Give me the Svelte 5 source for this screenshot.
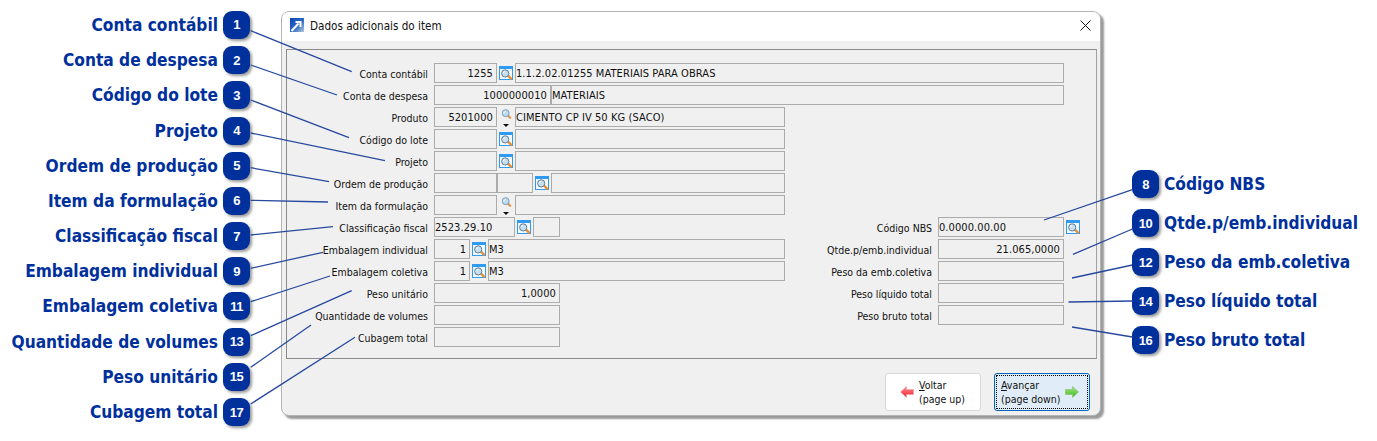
<script>
  const leftCalls = [
    ['Conta contábil', 1], ['Conta de despesa', 2], ['Código do lote', 3], ['Projeto', 4],
    ['Ordem de produção', 5], ['Item da formulação', 6], ['Classificação fiscal', 7],
    ['Embalagem individual', 9], ['Embalagem coletiva', 11], ['Quantidade de volumes', 13],
    ['Peso unitário', 15], ['Cubagem total', 17]
  ];
  const rightCalls = [
    ['Código NBS', 8], ['Qtde.p/emb.individual', 10], ['Peso da emb.coletiva', 12],
    ['Peso líquido total', 14], ['Peso bruto total', 16]
  ];
  const F = (w, t = '', r = false) => ({ k: 'f', w, t, r });
  const L = { k: 'l' };
  const M = { k: 'm' };
  const topRows = [
    ['Conta contábil', [F(63, '1255', true), L, F(549, '1.1.2.02.01255 MATERIAIS PARA OBRAS')]],
    ['Conta de despesa', [F(117, '1000000010', true), F(513, 'MATERIAIS')]],
    ['Produto', [F(63, '5201000', true), M, F(270, 'CIMENTO CP IV 50 KG (SACO)')]],
    ['Código do lote', [F(63), L, F(270)]],
    ['Projeto', [F(63), L, F(270)]],
    ['Ordem de produção', [F(63), F(36), L, F(234)]],
    ['Item da formulação', [F(63), M, F(270)]]
  ];
  const leftRows = [
    ['Classificação fiscal', [F(81, '2523.29.10'), L, F(27)]],
    ['Embalagem individual', [F(36, '1', true), L, F(297, 'M3')]],
    ['Embalagem coletiva', [F(36, '1', true), L, F(297, 'M3')]],
    ['Peso unitário', [F(126, '1,0000', true)]],
    ['Quantidade de volumes', [F(126)]],
    ['Cubagem total', [F(126)]]
  ];
  const rightRows = [
    ['Código NBS', [F(126, '0.0000.00.00'), L]],
    ['Qtde.p/emb.individual', [F(126, '21.065,0000', true)]],
    ['Peso da emb.coletiva', [F(126)]],
    ['Peso líquido total', [F(126)]],
    ['Peso bruto total', [F(126)]]
  ];
  const lines = [
    [250.7, 30.7, 351.7, 71.7], [250.7, 65, 337, 95], [250.7, 100, 349, 137.7],
    [250.7, 133, 385, 160.7], [250.7, 167.7, 329, 181.7], [250.7, 200.3, 328, 202],
    [250.7, 235, 333, 226.7], [250.7, 268.3, 323, 252.3], [250.7, 301.7, 330, 276],
    [250.7, 335.7, 351.7, 290.7], [250.7, 367.3, 311, 325], [250.7, 404, 355, 337.3],
    [1132.4, 189.7, 1044, 220], [1132.4, 229, 1073, 254.4], [1132.4, 265, 1072, 278],
    [1132.4, 301, 1068.5, 302], [1132.4, 337, 1072, 327]
  ];
</script>

{#snippet row(label, cells, cls)}
  <div class="row">
    <span class="label {cls}">{label}</span>
    {#each cells as c}
      {#if c.k === 'f'}
        <span class="field" class:right={c.r} style:width="{c.w}px">{c.t}</span>
      {:else if c.k === 'l'}
        <svg class="lookup" viewBox="0 0 14 14" width="14" height="14" aria-hidden="true">
          <rect x=".5" y=".5" width="13" height="13" fill="#f4fafe" stroke="#2e9bf0" />
          <rect x="0" y="0" width="14" height="3" fill="#2e9bf0" />
          <path d="M9 9.6l3 3" stroke="#ea8f34" stroke-width="2.4" stroke-linecap="round" />
          <circle cx="6.2" cy="7.4" r="3.6" fill="#c6deee" stroke="#5f7f99" stroke-width="1" />
          <path d="M4.3 7.2a2 2 0 0 1 1.8-1.8" fill="none" stroke="#fff" stroke-width="1" />
        </svg>
      {:else}
        <span class="drop">
          <svg class="glass" viewBox="0 0 11 11" width="11" height="10" aria-hidden="true">
            <path d="M7.2 7.4l2.4 2.2" stroke="#ea8f34" stroke-width="2.4" stroke-linecap="round" />
            <circle cx="4.6" cy="4.6" r="3.8" fill="#bcdcf2" stroke="#6f97b8" stroke-width="1" />
            <path d="M2.6 4.4a2 2 0 0 1 1.8-1.8" fill="none" stroke="#fff" stroke-width="1" />
          </svg>
          <i class="caret"></i>
        </span>
      {/if}
    {/each}
  </div>
{/snippet}

<div class="page">
  <aside class="calls left">
    {#each leftCalls as [t, n]}
      <div class="call"><span class="ctext">{t}</span><span class="badge">{n}</span></div>
    {/each}
  </aside>

  <section class="window">
    <header class="title">
      <svg viewBox="0 0 14 14" width="14" height="14" aria-hidden="true">
        <defs>
          <linearGradient id="tg" x1="0" y1="0" x2="1" y2="1">
            <stop offset="0" stop-color="#0b45b4" />
            <stop offset=".55" stop-color="#2f6cc4" />
            <stop offset="1" stop-color="#b7c9de" />
          </linearGradient>
        </defs>
        <rect width="14" height="14" fill="url(#tg)" />
        <path d="M1.5 13L8.5 5.5M5.5 4h5v5" fill="none" stroke="#fff" stroke-width="2" />
      </svg>
      <span class="ttext">Dados adicionais do item</span>
      <svg class="close" viewBox="0 0 11 11" width="11" height="11" aria-hidden="true">
        <path d="M.5.5l10 10M10.5.5l-10 10" stroke="#111" stroke-width="1" fill="none" />
      </svg>
    </header>

    <div class="panel">
      <div class="stack">
        {#each topRows as [l, c]}{@render row(l, c, 'lw')}{/each}
      </div>
      <div class="lower">
        <div class="stack lcol">
          {#each leftRows as [l, c]}{@render row(l, c, 'lw')}{/each}
        </div>
        <div class="stack rcol">
          {#each rightRows as [l, c]}{@render row(l, c, 'rw')}{/each}
        </div>
      </div>
    </div>

    <footer class="foot">
      <button class="btn">
        <svg viewBox="0 0 14 12" width="14" height="12" aria-hidden="true">
          <defs>
            <linearGradient id="rg" x1="0" y1="0" x2="0" y2="1">
              <stop offset="0" stop-color="#ff8f96" />
              <stop offset="1" stop-color="#ee1c2a" />
            </linearGradient>
            <linearGradient id="gg" x1="0" y1="0" x2="0" y2="1">
              <stop offset="0" stop-color="#a6ec7e" />
              <stop offset="1" stop-color="#3cb522" />
            </linearGradient>
          </defs>
          <path d="M.5 6L6.5.5v3h7v5h-7v3z" fill="url(#rg)" stroke="#f2a0a0" stroke-width=".7" />
        </svg>
        <span class="btxt"><u>V</u>oltar<br />(page up)</span>
      </button>
      <button class="btn primary">
        <span class="btxt"><u>A</u>vançar<br />(page down)</span>
        <svg viewBox="0 0 14 12" width="14" height="12" aria-hidden="true">
          <path d="M13.5 6L7.5.5v3h-7v5h7v3z" fill="url(#gg)" stroke="#8cc47a" stroke-width=".7" />
        </svg>
      </button>
    </footer>
  </section>

  <aside class="calls rightc">
    {#each rightCalls as [t, n]}
      <div class="call"><span class="badge">{n}</span><span class="ctext">{t}</span></div>
    {/each}
  </aside>

  <svg class="wires" width="1377" height="441" aria-hidden="true">
    {#each lines as [a, b, c, d]}
      <line x1={a} y1={b} x2={c} y2={d} />
    {/each}
  </svg>
</div>

<style>
  :global(body) {
    margin: 0;
    background: #fff;
  }
  .page {
    position: relative;
    display: flex;
    align-items: flex-start;
    width: 1377px;
    height: 441px;
    overflow: hidden;
    font-family: "DejaVu Sans Condensed", "DejaVu Sans", sans-serif;
    font-size: 10.5px;
    color: #111;
  }
  .calls {
    flex: none;
    display: flex;
    flex-direction: column;
  }
  .left {
    width: 250px;
    padding-top: 7.4px;
  }
  .left .call {
    height: 35.2px;
    justify-content: flex-end;
  }
  .rightc {
    margin-left: 31px;
    padding-top: 165px;
  }
  .rightc .call {
    height: 38.9px;
  }
  .call {
    display: flex;
    align-items: center;
    gap: 5px;
  }
  .ctext {
    font-size: 17.2px;
    font-weight: 700;
    color: #00309c;
    white-space: nowrap;
  }
  .badge {
    flex: none;
    display: flex;
    align-items: center;
    justify-content: center;
    width: 27px;
    height: 28px;
    border-radius: 9px;
    background: #00309c;
    color: #fff;
    font-family: "Liberation Sans", sans-serif;
    font-size: 13px;
    font-weight: 700;
    letter-spacing: -0.5px;
    box-shadow: 2px 2px 3px rgba(0, 0, 0, 0.4);
  }
  .window {
    flex: none;
    box-sizing: border-box;
    width: 820px;
    height: 405px;
    margin: 11px 0 0 31px;
    background: #f0f0f0;
    border: 1px solid #b4b4b4;
    border-radius: 8px;
    box-shadow: 3px 3px 2px #9a9a9a;
  }
  .title {
    box-sizing: border-box;
    display: flex;
    align-items: center;
    height: 29px;
    padding: 0 9px 3px 8px;
    background: #fff;
    border-radius: 7px 7px 0 0;
  }
  .ttext {
    margin-left: 6px;
    padding-top: 2px;
    font-size: 11.6px;
  }
  .close {
    margin-left: auto;
  }
  .panel {
    box-sizing: border-box;
    height: 310px;
    margin: 8px 3px 0 4px;
    padding-top: 13px;
    border: 1px solid #8a8a8a;
    border-right-color: #a0a0a0;
  }
  .stack {
    display: flex;
    flex-direction: column;
    gap: 2px;
  }
  .lower {
    display: flex;
    margin-top: 2px;
  }
  .lcol {
    flex: none;
    width: 498px;
  }
  .rcol {
    margin-left: 15px;
  }
  .row {
    display: flex;
    align-items: center;
    height: 20px;
  }
  .label {
    flex: none;
    margin-right: 6px;
    padding-top: 2px;
    text-align: right;
    white-space: nowrap;
  }
  .lw {
    width: 141px;
  }
  .rw {
    width: 132px;
  }
  .field {
    flex: none;
    box-sizing: border-box;
    height: 20px;
    padding: 0;
    font-size: 11px;
    letter-spacing: 0.08px;
    line-height: 20px;
    background: #f0f0f0;
    border: 1px solid #ababab;
    white-space: nowrap;
    overflow: hidden;
  }
  .right {
    padding-right: 3px;
    text-align: right;
  }
  .lookup {
    flex: none;
    margin: 0 2px;
  }
  .drop {
    flex: none;
    display: flex;
    flex-direction: column;
    align-items: center;
    width: 18px;
    height: 20px;
  }
  .caret {
    margin-top: 5px;
    border: 3px solid transparent;
    border-top-color: #111;
    border-bottom-width: 0;
  }
  .drop .glass {
    flex: none;
    margin-top: 2px;
  }
  .foot {
    display: flex;
    justify-content: flex-end;
    gap: 13px;
    margin-top: 14px;
    padding-right: 10px;
  }
  .btn {
    box-sizing: border-box;
    display: flex;
    align-items: center;
    gap: 5px;
    width: 96px;
    height: 38px;
    padding: 0 0 0 14px;
    background: #fff;
    border: 1px solid #d8d8d8;
    border-radius: 3px;
    font: inherit;
    color: inherit;
    text-align: left;
  }
  .btxt {
    line-height: 14px;
  }
  .primary {
    padding-left: 6px;
    background: #e0ecf8;
    border-color: #0067c0;
    outline: 1px dotted #000;
    outline-offset: -3px;
  }
  .wires {
    position: absolute;
    left: 0;
    top: 0;
    pointer-events: none;
  }
  line {
    stroke: #28499f;
    stroke-width: 1.3;
  }
</style>
